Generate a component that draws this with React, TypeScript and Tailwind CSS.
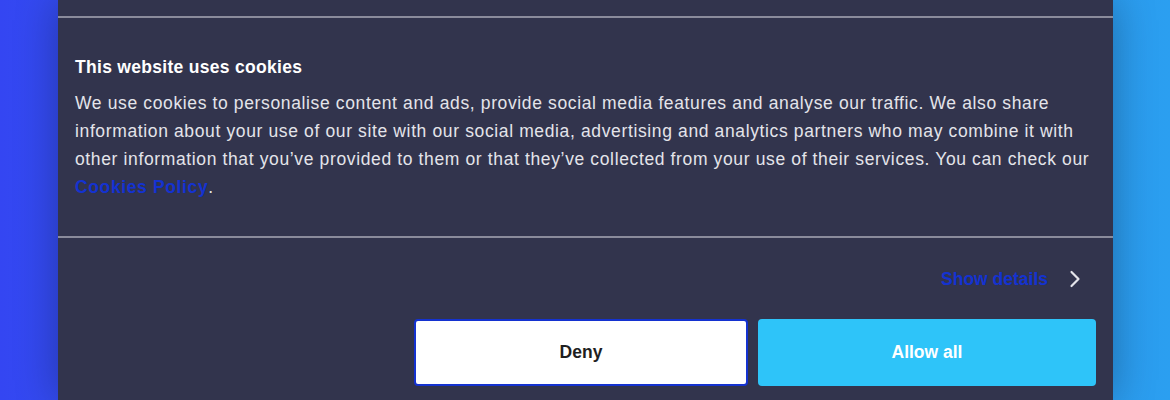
import React from "react";

export default function App() {
  return (
    <div
      className="w-[1170px] h-[400px] overflow-hidden bg-[linear-gradient(90deg,#3446f2_0%,#2f7ee6_50%,#2b9ff0_100%)]"
      style={{ fontFamily: '"Liberation Sans", Arial, sans-serif' }}
    >
      <div className="ml-[58px] w-[1055px] h-[400px] bg-[#32344d] shadow-[0_0_40px_rgba(0,0,0,0.3)] flex flex-col">
        <div className="h-[16px]" />
        <div className="h-[2px] bg-[#8a8b9b]" />
        <div className="pl-[17px] pr-[17px] pt-[37px] pb-[35px]">
          <h2 className="text-[17.5px] leading-[24px] font-bold text-white tracking-[0.3px]">
            This website uses cookies
          </h2>
          <p className="mt-[10px] text-[17.5px] leading-[28px] text-[#e4e4ea] tracking-[0.63px]">
            We use cookies to personalise content and ads, provide social media features and analyse our traffic. We also share information about your use of our site with our social media, advertising and analytics partners who may combine it with other information that you’ve provided to them or that they’ve collected from your use of their services. You can check our{" "}
            <a className="font-bold text-[#1432d0]">Cookies Policy</a>.
          </p>
        </div>
        <div className="h-[2px] bg-[#8a8b9b]" />
        <div className="flex justify-end items-center pt-[29px] pr-[32px]">
          <span className="text-[17.5px] leading-[24px] font-bold text-[#1432d0]">
            Show details
          </span>
          <svg className="ml-[21px]" width="12" height="18" viewBox="0 0 12 18" fill="none">
            <path d="M2.5 2l7 7-7 7" stroke="#e4e4ea" strokeWidth="2.2" strokeLinecap="round" strokeLinejoin="round" />
          </svg>
        </div>
        <div className="flex justify-end gap-[10px] pt-[28px] pr-[17px]">
          <button className="w-[334px] h-[67px] bg-white border-2 border-[#1432d0] rounded-[4px] text-[17.5px] font-bold text-[#1f1f1f]">
            Deny
          </button>
          <button className="w-[338px] h-[67px] bg-[#2ec4f9] rounded-[4px] text-[17.5px] font-bold text-white">
            Allow all
          </button>
        </div>
      </div>
    </div>
  );
}
